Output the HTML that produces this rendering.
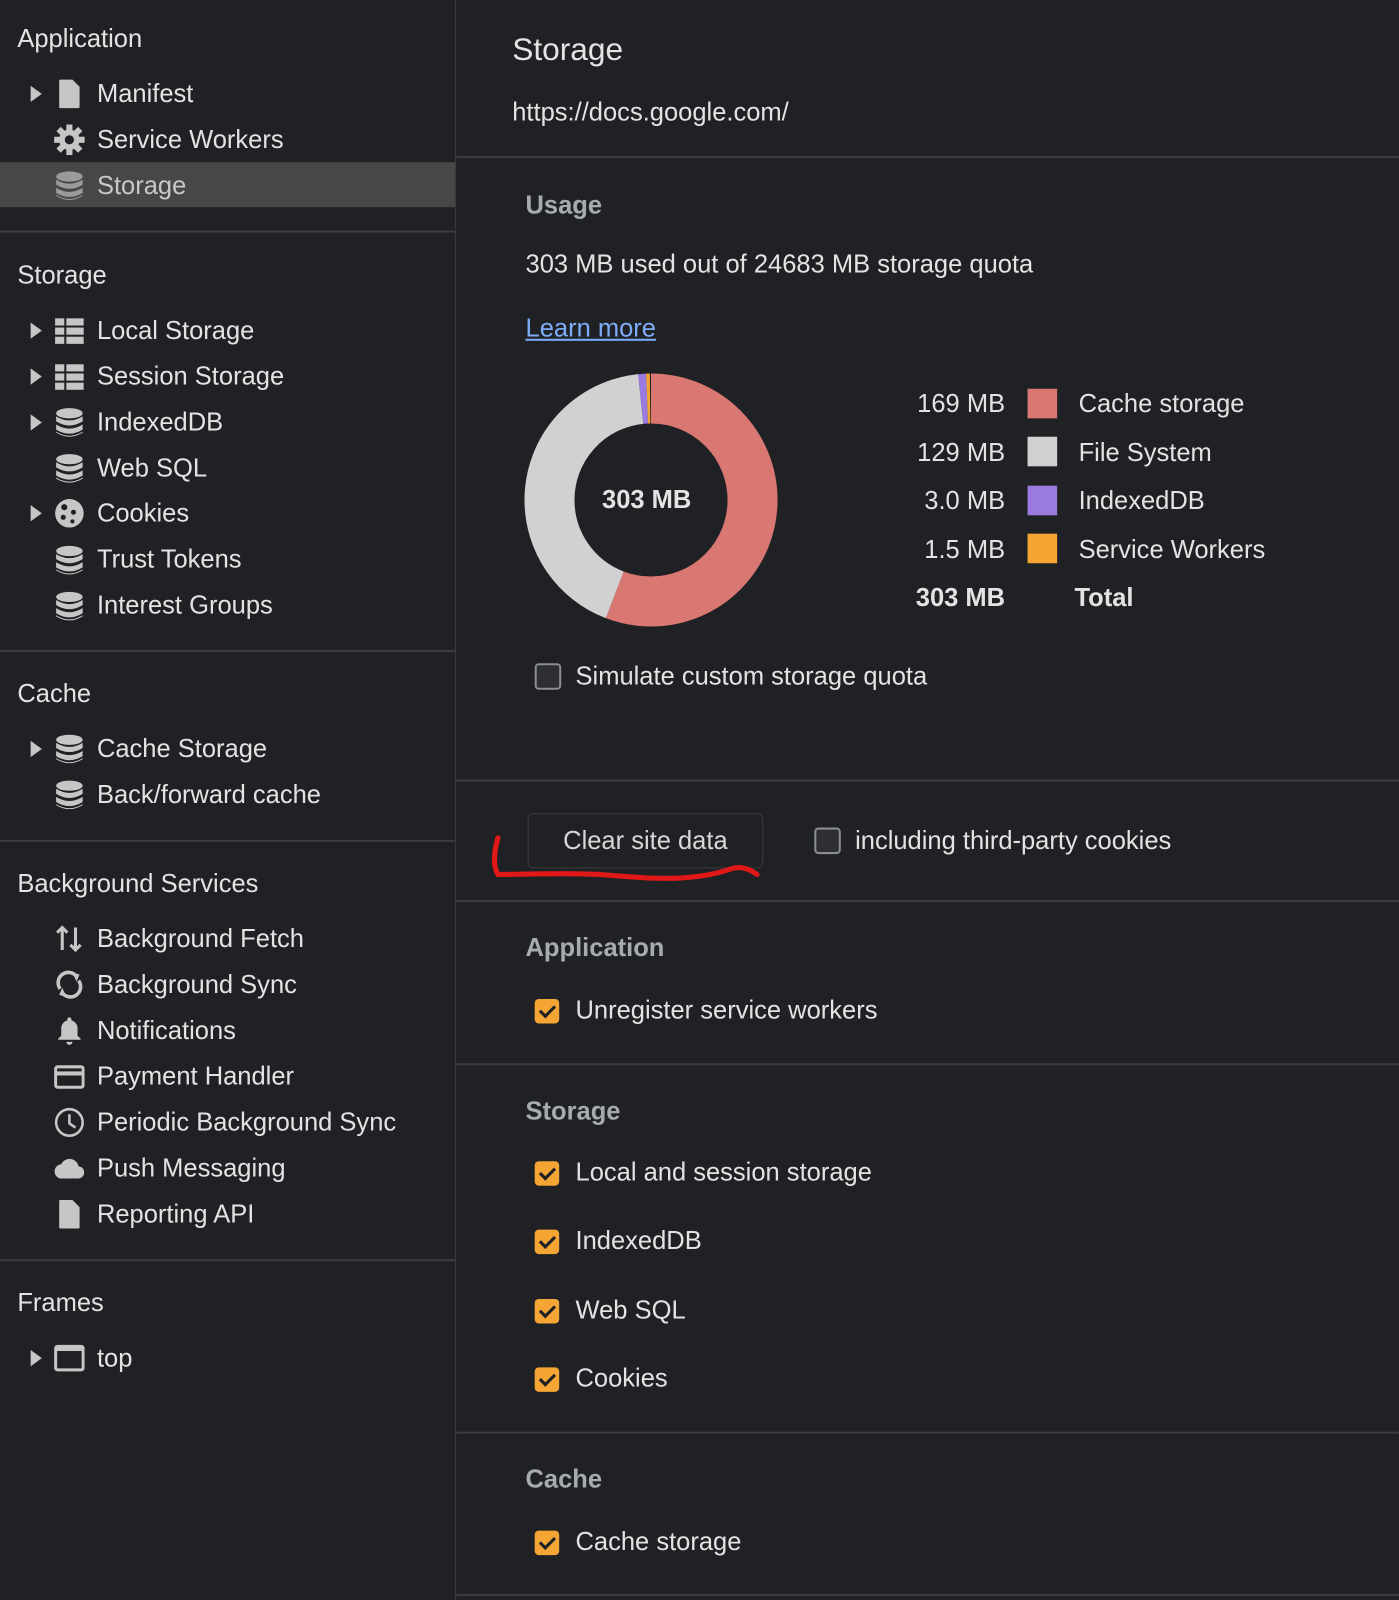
<!DOCTYPE html>
<html><head><meta charset="utf-8">
<style>
html,body{margin:0;padding:0;background:#202124;width:1399px;height:1600px;overflow:hidden}
#w{position:absolute;left:0;top:0;width:1371px;height:1568px;transform:scale(1.0204);transform-origin:0 0;font-family:"Liberation Sans",sans-serif;color:#e3e3e3}
.a{position:absolute;white-space:nowrap}
.sb{position:absolute;left:0;top:0;width:446px;height:1568px;border-right:1px solid #3c3c3c}
.hd{font-size:25px;left:17px}
.it{font-size:25px;left:95px}
.tri{position:absolute;width:0;height:0;border-left:11px solid #c4c7c5;border-top:8px solid transparent;border-bottom:8px solid transparent;left:30px}
.ic{position:absolute;left:53px;width:30px;height:30px}
.hr{position:absolute;height:2px;background:#3c3c3c}
.sh{font-size:25px;font-weight:bold;color:#a8abae;left:515px}
.t{font-size:25px}
.cb{position:absolute;width:24px;height:24px;border-radius:4px;left:524px}
.off{border:2px solid #8a8d91;background:#2e2f33;width:22px;height:22px}
.on{background:#f4a533}
.on:after{content:"";position:absolute;left:8px;top:3px;width:6px;height:12px;border:solid #202124;border-width:0 3px 3px 0;transform:rotate(45deg)}
.sw{position:absolute;left:1007px;width:29px;height:29px}
.v{position:absolute;right:386px;font-size:25px;text-align:right}
</style></head><body><div id="w">
<div class="sb"></div>
<div style="position:absolute;left:0;top:159px;width:446px;height:44px;background:#474747"></div>
<div class="hr" style="left:0;width:446px;top:226px"></div>
<div class="hr" style="left:0;width:446px;top:637px"></div>
<div class="hr" style="left:0;width:446px;top:823px"></div>
<div class="hr" style="left:0;width:446px;top:1234px"></div>

<div class="a hd" style="top:24px">Application</div>
<div class="tri" style="top:84px"></div>
<svg class="ic" style="top:77px" viewBox="0 0 30 30"><path d="M6 1h12l7 7v20a1 1 0 0 1-1 1H6a1 1 0 0 1-1-1V2a1 1 0 0 1 1-1z" fill="#c4c7c5"/></svg>
<div class="a it" style="top:78px">Manifest</div>
<svg class="ic" style="top:122px" viewBox="0 0 30 30"><g fill="#c4c7c5"><circle cx="15" cy="15" r="10"/><rect x="12" y="0" width="6" height="30"/><rect x="0" y="12" width="30" height="6"/><rect x="12" y="0" width="6" height="30" transform="rotate(45 15 15)"/><rect x="12" y="0" width="6" height="30" transform="rotate(-45 15 15)"/></g><circle cx="15" cy="15" r="4.5" fill="#202124"/></svg>
<div class="a it" style="top:123px">Service Workers</div>
<svg class="ic" style="top:167px" viewBox="0 0 30 30"><g fill="#9a9a9a"><ellipse cx="15" cy="6" rx="13" ry="5"/><path d="M2 9q13 8 26 0v5q-13 8-26 0z"/><path d="M2 17q13 8 26 0v5q-13 8-26 0z"/><path d="M2 24q13 8 26 0v1q-13 8-26 0z"/></g></svg>
<div class="a it" style="top:168px;color:#c8c8c8">Storage</div>

<div class="a hd" style="top:256px">Storage</div>
<div class="tri" style="top:316px"></div>
<svg class="ic" style="top:309px" viewBox="0 0 30 30"><g fill="#c4c7c5"><rect x="1" y="3" width="9" height="7"/><rect x="12" y="3" width="17" height="7"/><rect x="1" y="12" width="9" height="7"/><rect x="12" y="12" width="17" height="7"/><rect x="1" y="21" width="9" height="7"/><rect x="12" y="21" width="17" height="7"/></g></svg>
<div class="a it" style="top:310px">Local Storage</div>
<div class="tri" style="top:361px"></div>
<svg class="ic" style="top:354px" viewBox="0 0 30 30"><g fill="#c4c7c5"><rect x="1" y="3" width="9" height="7"/><rect x="12" y="3" width="17" height="7"/><rect x="1" y="12" width="9" height="7"/><rect x="12" y="12" width="17" height="7"/><rect x="1" y="21" width="9" height="7"/><rect x="12" y="21" width="17" height="7"/></g></svg>
<div class="a it" style="top:355px">Session Storage</div>
<div class="tri" style="top:406px"></div>
<svg class="ic" style="top:399px" viewBox="0 0 30 30"><g fill="#c4c7c5"><ellipse cx="15" cy="6" rx="13" ry="5"/><path d="M2 9q13 8 26 0v5q-13 8-26 0z"/><path d="M2 17q13 8 26 0v5q-13 8-26 0z"/><path d="M2 24q13 8 26 0v1q-13 8-26 0z"/></g></svg>
<div class="a it" style="top:400px">IndexedDB</div>
<svg class="ic" style="top:444px" viewBox="0 0 30 30"><g fill="#c4c7c5"><ellipse cx="15" cy="6" rx="13" ry="5"/><path d="M2 9q13 8 26 0v5q-13 8-26 0z"/><path d="M2 17q13 8 26 0v5q-13 8-26 0z"/><path d="M2 24q13 8 26 0v1q-13 8-26 0z"/></g></svg>
<div class="a it" style="top:445px">Web SQL</div>
<div class="tri" style="top:495px"></div>
<svg class="ic" style="top:488px" viewBox="0 0 30 30"><circle cx="15" cy="15" r="14" fill="#c4c7c5"/><g fill="#202124"><circle cx="10" cy="9" r="3"/><circle cx="19" cy="14" r="2.5"/><circle cx="9" cy="19" r="2.5"/><circle cx="18" cy="23" r="2"/></g></svg>
<div class="a it" style="top:489px">Cookies</div>
<svg class="ic" style="top:534px" viewBox="0 0 30 30"><g fill="#c4c7c5"><ellipse cx="15" cy="6" rx="13" ry="5"/><path d="M2 9q13 8 26 0v5q-13 8-26 0z"/><path d="M2 17q13 8 26 0v5q-13 8-26 0z"/><path d="M2 24q13 8 26 0v1q-13 8-26 0z"/></g></svg>
<div class="a it" style="top:534px">Trust Tokens</div>
<svg class="ic" style="top:579px" viewBox="0 0 30 30"><g fill="#c4c7c5"><ellipse cx="15" cy="6" rx="13" ry="5"/><path d="M2 9q13 8 26 0v5q-13 8-26 0z"/><path d="M2 17q13 8 26 0v5q-13 8-26 0z"/><path d="M2 24q13 8 26 0v1q-13 8-26 0z"/></g></svg>
<div class="a it" style="top:579px">Interest Groups</div>

<div class="a hd" style="top:666px">Cache</div>
<div class="tri" style="top:726px"></div>
<svg class="ic" style="top:719px" viewBox="0 0 30 30"><g fill="#c4c7c5"><ellipse cx="15" cy="6" rx="13" ry="5"/><path d="M2 9q13 8 26 0v5q-13 8-26 0z"/><path d="M2 17q13 8 26 0v5q-13 8-26 0z"/><path d="M2 24q13 8 26 0v1q-13 8-26 0z"/></g></svg>
<div class="a it" style="top:720px">Cache Storage</div>
<svg class="ic" style="top:764px" viewBox="0 0 30 30"><g fill="#c4c7c5"><ellipse cx="15" cy="6" rx="13" ry="5"/><path d="M2 9q13 8 26 0v5q-13 8-26 0z"/><path d="M2 17q13 8 26 0v5q-13 8-26 0z"/><path d="M2 24q13 8 26 0v1q-13 8-26 0z"/></g></svg>
<div class="a it" style="top:765px">Back/forward cache</div>

<div class="a hd" style="top:852px">Background Services</div>
<svg class="ic" style="top:905px" viewBox="0 0 30 30"><g stroke="#c4c7c5" stroke-width="3" fill="none"><path d="M8 26V4M3 9l5-5 5 5M21 4v22M16 21l5 5 5-5"/></g></svg>
<div class="a it" style="top:906px">Background Fetch</div>
<svg class="ic" style="top:950px" viewBox="0 0 30 30"><g stroke="#c4c7c5" stroke-width="3.5" fill="none"><path d="M6 19A10 10 0 0 1 22 7"/><path d="M24 11A10 10 0 0 1 8 23"/></g><path d="M18 3l7 2-3 7z M12 27l-7-2 3-7z" fill="#c4c7c5"/></svg>
<div class="a it" style="top:951px">Background Sync</div>
<svg class="ic" style="top:995px" viewBox="0 0 30 30"><path d="M15 2a2 2 0 0 1 2 2v1a8 8 0 0 1 6 8v7l3 3v1H4v-1l3-3v-7a8 8 0 0 1 6-8V4a2 2 0 0 1 2-2zM12 26h6a3 3 0 0 1-6 0z" fill="#c4c7c5"/></svg>
<div class="a it" style="top:996px">Notifications</div>
<svg class="ic" style="top:1040px" viewBox="0 0 30 30"><rect x="1.5" y="5.5" width="27" height="20" rx="2" fill="none" stroke="#c4c7c5" stroke-width="3"/><rect x="2" y="10" width="26" height="4" fill="#c4c7c5"/></svg>
<div class="a it" style="top:1041px">Payment Handler</div>
<svg class="ic" style="top:1085px" viewBox="0 0 30 30"><circle cx="15" cy="15" r="13" fill="none" stroke="#c4c7c5" stroke-width="2.5"/><path d="M15 7v9l6 4" fill="none" stroke="#c4c7c5" stroke-width="2.5"/></svg>
<div class="a it" style="top:1086px">Periodic Background Sync</div>
<svg class="ic" style="top:1130px" viewBox="0 0 30 30"><path d="M8 25a7 7 0 0 1-1-14 9 9 0 0 1 17 2 6 6 0 0 1-1 12z" fill="#c4c7c5"/></svg>
<div class="a it" style="top:1131px">Push Messaging</div>
<svg class="ic" style="top:1175px" viewBox="0 0 30 30"><path d="M6 1h12l7 7v20a1 1 0 0 1-1 1H6a1 1 0 0 1-1-1V2a1 1 0 0 1 1-1z" fill="#c4c7c5"/></svg>
<div class="a it" style="top:1176px">Reporting API</div>

<div class="a hd" style="top:1263px">Frames</div>
<div class="tri" style="top:1323px"></div>
<svg class="ic" style="top:1316px" viewBox="0 0 30 30"><rect x="1.5" y="3.5" width="27" height="23" rx="2" fill="none" stroke="#c4c7c5" stroke-width="3"/><rect x="2" y="4" width="26" height="4" fill="#c4c7c5"/></svg>
<div class="a it" style="top:1317px">top</div>

<!-- main -->
<div class="a" style="left:502px;top:31px;font-size:31px">Storage</div>
<div class="a t" style="left:502px;top:96px">https://docs.google.com/</div>
<div class="hr" style="left:447px;width:924px;top:153px"></div>
<div class="a sh" style="top:187px">Usage</div>
<div class="a t" style="left:515px;top:245px">303 MB used out of 24683 MB storage quota</div>
<div class="a t" style="left:515px;top:308px;color:#7cacf8;text-decoration:underline">Learn more</div>
<svg style="position:absolute;left:513px;top:365px" width="250" height="250" viewBox="0 0 250 250">
<g transform="rotate(-90 125 125)" fill="none" stroke-width="49">
<circle cx="125" cy="125" r="99.5" stroke="#d97872" stroke-dasharray="348.8 1000"/>
<circle cx="125" cy="125" r="99.5" stroke="#d1d1d1" stroke-dasharray="0 348.8 266 1000"/>
<circle cx="125" cy="125" r="99.5" stroke="#9b7ae0" stroke-dasharray="0 614.8 6.2 1000"/>
<circle cx="125" cy="125" r="99.5" stroke="#f4a533" stroke-dasharray="0 621 3 1000"/>
</g></svg>
<div class="a" style="left:590px;top:476px;font-size:25px;font-weight:bold">303 MB</div>
<div class="v" style="top:382px">169 MB</div><div class="sw" style="top:381px;background:#d97872"></div><div class="a t" style="left:1057px;top:382px">Cache storage</div>
<div class="v" style="top:430px">129 MB</div><div class="sw" style="top:428px;background:#d1d1d1"></div><div class="a t" style="left:1057px;top:430px">File System</div>
<div class="v" style="top:477px">3.0 MB</div><div class="sw" style="top:476px;background:#9b7ae0"></div><div class="a t" style="left:1057px;top:477px">IndexedDB</div>
<div class="v" style="top:525px">1.5 MB</div><div class="sw" style="top:523px;background:#f4a533"></div><div class="a t" style="left:1057px;top:525px">Service Workers</div>
<div class="v" style="top:572px;font-weight:bold">303 MB</div><div class="a t" style="left:1053px;top:572px;font-weight:bold">Total</div>
<div class="cb off" style="top:650px"></div>
<div class="a t" style="left:564px;top:649px">Simulate custom storage quota</div>
<div class="hr" style="left:447px;width:924px;top:764px"></div>
<div style="position:absolute;left:517px;top:797px;width:229px;height:52px;border:1px solid #3c3c3c;border-radius:6px;background:#202124"></div>
<div class="a t" style="left:518px;width:229px;text-align:center;top:810px;color:#d8d8d8">Clear site data</div>
<div class="cb off" style="left:798px;top:811px"></div>
<div class="a t" style="left:838px;top:810px">including third-party cookies</div>
<svg style="position:absolute;left:480px;top:815px" width="280" height="55"><path d="M8 6c-4 14-5 28 0 36c40 0 60-2 100 0c50 4 90 8 130-6c8-2 16 0 24 6" fill="none" stroke="#e01818" stroke-width="5" stroke-linecap="round"/></svg>
<div class="hr" style="left:447px;width:924px;top:882px"></div>
<div class="a sh" style="top:915px">Application</div>
<div class="cb on" style="top:979px"></div><div class="a t" style="left:564px;top:976px">Unregister service workers</div>
<div class="hr" style="left:447px;width:924px;top:1042px"></div>
<div class="a sh" style="top:1075px">Storage</div>
<div class="cb on" style="top:1138px"></div><div class="a t" style="left:564px;top:1135px">Local and session storage</div>
<div class="cb on" style="top:1205px"></div><div class="a t" style="left:564px;top:1202px">IndexedDB</div>
<div class="cb on" style="top:1273px"></div><div class="a t" style="left:564px;top:1270px">Web SQL</div>
<div class="cb on" style="top:1340px"></div><div class="a t" style="left:564px;top:1337px">Cookies</div>
<div class="hr" style="left:447px;width:924px;top:1403px"></div>
<div class="a sh" style="top:1436px">Cache</div>
<div class="cb on" style="top:1500px"></div><div class="a t" style="left:564px;top:1497px">Cache storage</div>
<div class="hr" style="left:447px;width:924px;top:1562px"></div>
</div></body></html>
